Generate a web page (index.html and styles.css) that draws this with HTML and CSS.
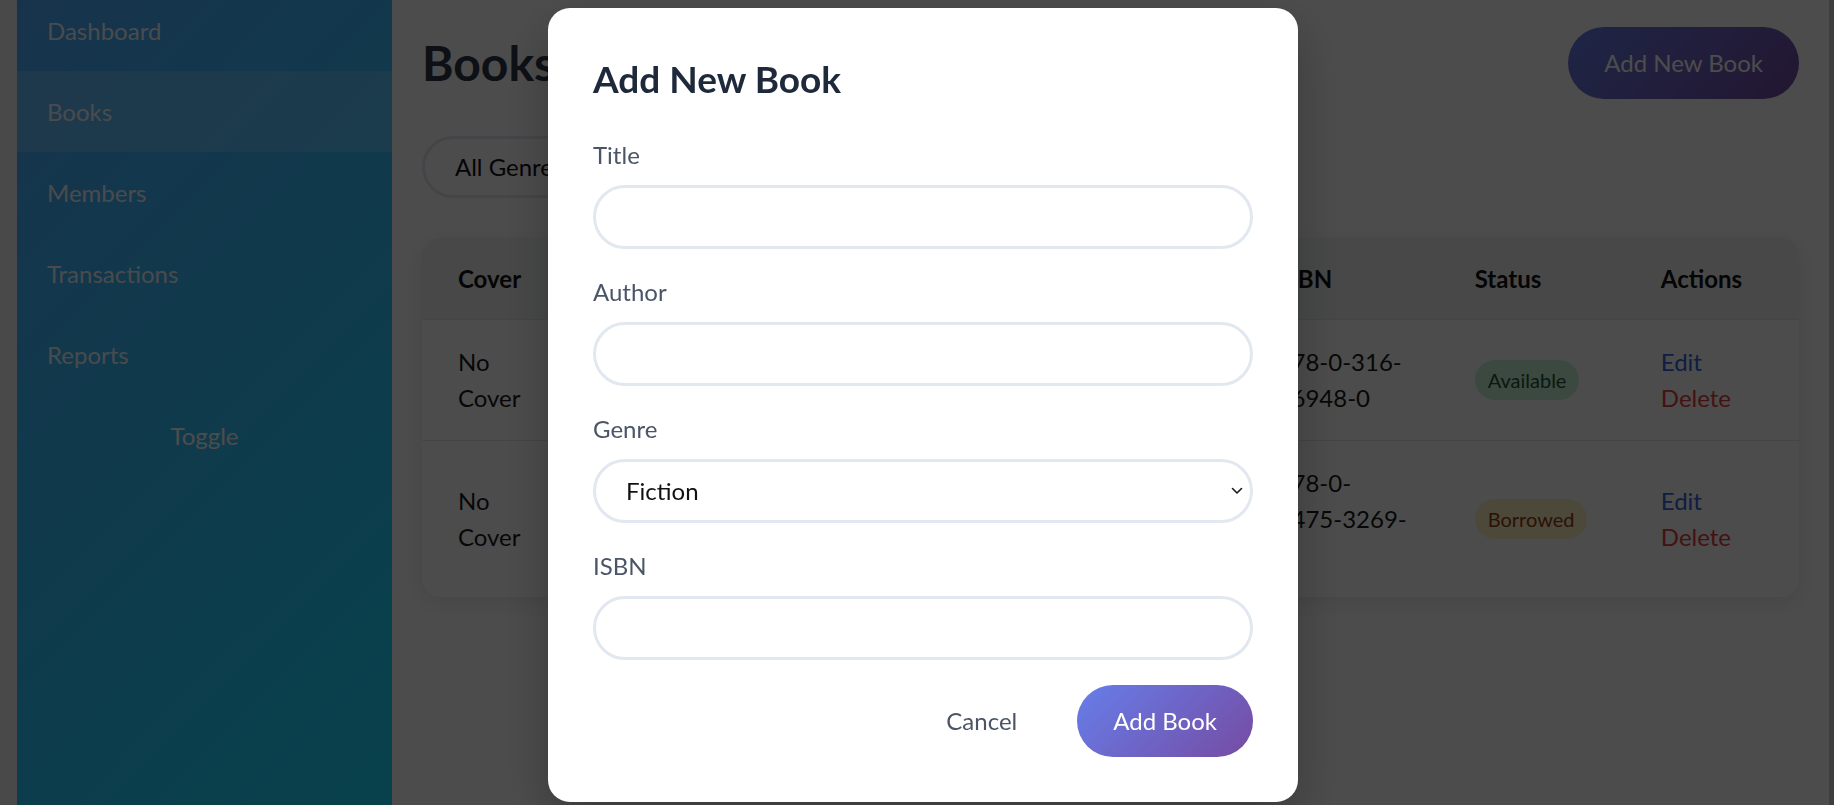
FILE: index.html
```html
<!DOCTYPE html>
<html lang="en">
<head>
<meta charset="utf-8">
<title>Books</title>
<link rel="stylesheet" href="styles.css">
</head>
<body>
<div class="app">
  <aside class="sidebar">
    <nav class="nav">
      <a class="nav-item" href="#">Dashboard</a>
      <a class="nav-item active" href="#">Books</a>
      <a class="nav-item" href="#">Members</a>
      <a class="nav-item" href="#">Transactions</a>
      <a class="nav-item" href="#">Reports</a>
    </nav>
    <button class="toggle" type="button">Toggle</button>
  </aside>
  <main class="main">
    <header class="page-header">
      <h1 class="page-title">Books</h1>
      <button class="btn-primary" type="button">Add New Book</button>
    </header>
    <div class="filters">
      <select class="filter-select">
        <option>All Genres</option>
        <option>Fiction</option>
        <option>Fantasy</option>
      </select>
      <input class="search" type="text" placeholder="Search books...">
    </div>
    <div class="table-card">
      <table class="books">
        <colgroup>
          <col class="c-cover"><col class="c-title"><col class="c-author"><col class="c-genre"><col class="c-isbn"><col class="c-status"><col class="c-actions">
        </colgroup>
        <thead>
          <tr><th>Cover</th><th>Title</th><th>Author</th><th>Genre</th><th>ISBN</th><th>Status</th><th>Actions</th></tr>
        </thead>
        <tbody>
          <tr>
            <td>No Cover</td>
            <td>The Catcher in the Rye</td>
            <td>J.D. Salinger</td>
            <td>Fiction</td>
            <td class="isbn">978-0-316-76948-0</td>
            <td><span class="badge available">Available</span></td>
            <td><a class="act edit" href="#">Edit</a><a class="act delete" href="#">Delete</a></td>
          </tr>
          <tr>
            <td>No Cover</td>
            <td>Harry Potter and the Stone</td>
            <td>J.K. Rowling</td>
            <td>Fantasy</td>
            <td class="isbn">978-0-7475-3269-9</td>
            <td><span class="badge borrowed">Borrowed</span></td>
            <td><a class="act edit" href="#">Edit</a><a class="act delete" href="#">Delete</a></td>
          </tr>
        </tbody>
      </table>
    </div>
  </main>
</div>

<div class="overlay">
  <div class="modal" role="dialog" aria-labelledby="modal-title">
    <h2 class="modal-title" id="modal-title">Add New Book</h2>
    <form class="form">
      <div class="field">
        <label class="label" for="f-title">Title</label>
        <input class="input" id="f-title" type="text">
      </div>
      <div class="field">
        <label class="label" for="f-author">Author</label>
        <input class="input" id="f-author" type="text">
      </div>
      <div class="field">
        <label class="label" for="f-genre">Genre</label>
        <div class="select-wrap">
          <select class="input select" id="f-genre">
            <option>Fiction</option>
            <option>Non-Fiction</option>
            <option>Fantasy</option>
            <option>Science</option>
          </select>
          <svg class="chevron" width="12" height="8" viewBox="0 0 12 8" aria-hidden="true"><path d="M1.5 1.5 L6 6 L10.5 1.5" fill="none" stroke="#1a1a1a" stroke-width="1.6" stroke-linecap="round" stroke-linejoin="round"/></svg>
        </div>
      </div>
      <div class="field">
        <label class="label" for="f-isbn">ISBN</label>
        <input class="input" id="f-isbn" type="text">
      </div>
      <div class="actions">
        <button class="btn-cancel" type="button">Cancel</button>
        <button class="btn-submit" type="submit">Add Book</button>
      </div>
    </form>
  </div>
</div>
</body>
</html>
```

FILE: styles.css
```css
* { box-sizing: border-box; }

html { background: #c9cfd6; }

body {
  margin: 0 5px 0 0;
  min-height: 100vh;
  overflow: hidden;
  font-family: "Lato", "Liberation Sans", sans-serif;
  font-size: 24px;
  line-height: 36px;
  color: #222;
  background: #f6f6f6;
}

.app {
  display: flex;
  min-height: 100vh;
  padding-left: 17px;
}

/* Sidebar */
.sidebar {
  width: 375px;
  flex: none;
  display: flex;
  flex-direction: column;
  background: linear-gradient(135deg, #4facfe 0%, #00f2fe 150%);
  color: #fff;
}

.nav {
  display: flex;
  flex-direction: column;
  margin-top: -10px;
}

.nav-item {
  padding: 22.5px 30px;
  color: rgba(255, 255, 255, 0.96);
  text-decoration: none;
}

.nav-item.active { background: rgba(255, 255, 255, 0.16); }

.toggle {
  align-self: center;
  margin-top: 23px;
  padding: 0;
  border: 0;
  background: none;
  color: #fff;
  font: inherit;
  line-height: 36px;
}

/* Main */
.main {
  flex: 1;
  min-width: 0;
  background: #fff;
  padding: 27px 30px 30px;
}

.page-header {
  display: flex;
  justify-content: space-between;
  align-items: center;
  margin-bottom: 37px;
}

.page-title {
  margin: 0;
  font-size: 48px;
  line-height: 72px;
  font-weight: 700;
  color: #2d3748;
}

.btn-primary {
  border: 0;
  border-radius: 999px;
  padding: 18px 36px;
  font: inherit;
  line-height: 36px;
  color: #fff;
  background: linear-gradient(135deg, #667eea 0%, #764ba2 100%);
}

.filters {
  display: flex;
  gap: 24px;
  margin-bottom: 40px;
}

.filter-select,
.search {
  height: 62px;
  border: 3px solid #e2e8f0;
  border-radius: 999px;
  padding: 0 30px;
  font: inherit;
  color: #111;
  background: #fff;
}

.filter-select { appearance: none; width: 240px; }
.search { width: 380px; }

.table-card {
  background: #fff;
  border-radius: 18px;
  overflow: hidden;
  box-shadow: 0 6px 24px rgba(0, 0, 0, 0.09);
}

.books {
  width: 100%;
  border-collapse: collapse;
  table-layout: fixed;
}

.c-cover { width: 150px; }
.c-title { width: 290px; }
.c-author { width: 210px; }
.c-genre { width: 169px; }
.c-isbn { width: 197px; }
.c-status { width: 186px; }
.c-actions { width: 174px; }

.books th {
  text-align: left;
  padding: 22.5px 36px;
  background: #f1f2f4;
  font-weight: 700;
  color: #111;
}

.books td {
  padding: 24px 36px;
  border-top: 1px solid #e4e6ea;
  vertical-align: middle;
  color: #1a1a1a;
}

.books td.isbn { padding-right: 30px; }

.badge {
  display: inline-block;
  padding: 6px 13px;
  border-radius: 999px;
  font-size: 20px;
  line-height: 28px;
}

.badge.available { background: #c6f6d5; color: #22543d; }
.badge.borrowed { background: #fef3c7; color: #92400e; }

.act {
  display: block;
  text-decoration: none;
}

.act.edit { color: #3366dd; }
.act.delete { color: #e53e3e; }

/* Modal */
.overlay {
  position: fixed;
  inset: 0;
  display: flex;
  align-items: center;
  justify-content: center;
  padding: 4px 0 0 12px;
  background: rgba(0, 0, 0, 0.7);
}

.modal {
  width: 750px;
  padding: 45px;
  background: #fff;
  border-radius: 22px;
  box-shadow: 0 20px 50px rgba(0, 0, 0, 0.25);
}

.modal-title {
  margin: 0 0 32px;
  font-size: 37px;
  line-height: 52px;
  font-weight: 700;
  color: #1e293b;
}

.form {
  display: flex;
  flex-direction: column;
  gap: 25px;
}

.field {
  display: flex;
  flex-direction: column;
}

.label {
  margin-bottom: 12px;
  color: #4a5568;
}

.input {
  width: 100%;
  height: 64px;
  border: 3px solid #e2e8f0;
  border-radius: 999px;
  padding: 0 30px;
  font: inherit;
  color: #111;
  background: #fff;
  outline: none;
}

.select { appearance: none; }

.select-wrap { position: relative; }

.chevron {
  position: absolute;
  right: 10px;
  top: 50%;
  transform: translateY(-50%);
  pointer-events: none;
}

.actions {
  display: flex;
  justify-content: flex-end;
  align-items: center;
  gap: 24px;
}

.btn-cancel {
  border: 0;
  background: none;
  padding: 18px 36px;
  font: inherit;
  line-height: 36px;
  color: #4a5568;
}

.btn-submit {
  border: 0;
  border-radius: 999px;
  padding: 18px 36px;
  font: inherit;
  line-height: 36px;
  color: #fff;
  background: linear-gradient(135deg, #667eea 0%, #764ba2 100%);
}
```
